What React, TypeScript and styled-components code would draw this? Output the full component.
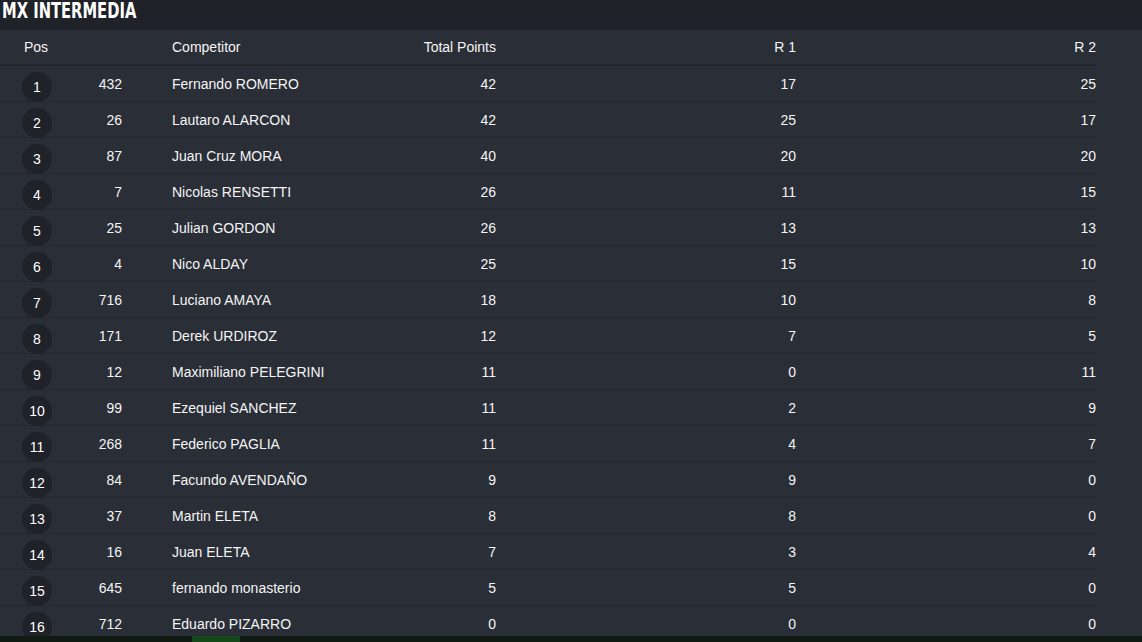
import React from 'react';
import styled, { createGlobalStyle } from 'styled-components';

type Row = {
  pos: number;
  bib: number;
  name: string;
  total: number;
  r1: number;
  r2: number;
};

const rows: Row[] = [
  { pos: 1, bib: 432, name: 'Fernando ROMERO', total: 42, r1: 17, r2: 25 },
  { pos: 2, bib: 26, name: 'Lautaro ALARCON', total: 42, r1: 25, r2: 17 },
  { pos: 3, bib: 87, name: 'Juan Cruz MORA', total: 40, r1: 20, r2: 20 },
  { pos: 4, bib: 7, name: 'Nicolas RENSETTI', total: 26, r1: 11, r2: 15 },
  { pos: 5, bib: 25, name: 'Julian GORDON', total: 26, r1: 13, r2: 13 },
  { pos: 6, bib: 4, name: 'Nico ALDAY', total: 25, r1: 15, r2: 10 },
  { pos: 7, bib: 716, name: 'Luciano AMAYA', total: 18, r1: 10, r2: 8 },
  { pos: 8, bib: 171, name: 'Derek URDIROZ', total: 12, r1: 7, r2: 5 },
  { pos: 9, bib: 12, name: 'Maximiliano PELEGRINI', total: 11, r1: 0, r2: 11 },
  { pos: 10, bib: 99, name: 'Ezequiel SANCHEZ', total: 11, r1: 2, r2: 9 },
  { pos: 11, bib: 268, name: 'Federico PAGLIA', total: 11, r1: 4, r2: 7 },
  { pos: 12, bib: 84, name: 'Facundo AVENDAÑO', total: 9, r1: 9, r2: 0 },
  { pos: 13, bib: 37, name: 'Martin ELETA', total: 8, r1: 8, r2: 0 },
  { pos: 14, bib: 16, name: 'Juan ELETA', total: 7, r1: 3, r2: 4 },
  { pos: 15, bib: 645, name: 'fernando monasterio', total: 5, r1: 5, r2: 0 },
  { pos: 16, bib: 712, name: 'Eduardo PIZARRO', total: 0, r1: 0, r2: 0 },
];

const GlobalStyle = createGlobalStyle`
  *, *::before, *::after {
    box-sizing: border-box;
  }
  html, body {
    margin: 0;
    padding: 0;
    background: #2a2e37;
    overflow: hidden;
  }
  body {
    font-family: "Liberation Sans", Arial, sans-serif;
    color: #f2f2f2;
  }
`;

const Page = styled.div`
  width: 1142px;
  height: 642px;
  display: flex;
  flex-direction: column;
  position: relative;
  overflow: hidden;
`;

const TitleBar = styled.header`
  flex-shrink: 0;
  height: 30px;
  background: #1f2228;
  display: flex;
  align-items: flex-start;
  padding-left: 2px;
`;

const Title = styled.h1`
  margin: 0;
  font-family: "DejaVu Sans Condensed", "DejaVu Sans", sans-serif;
  font-weight: 700;
  font-size: 21px;
  line-height: 23px;
  color: #ffffff;
  transform: scaleX(0.78);
  transform-origin: left center;
  white-space: nowrap;
`;

const Panel = styled.section`
  flex: 1;
  background: #2a2e37;
`;

const Grid = styled.div`
  width: 1096px;
  display: grid;
  grid-template-columns: 72px 100px 200px 124px 300px 300px;
`;

const HeadCell = styled.div<{ $right?: boolean; $pad?: number }>`
  height: 36px;
  display: flex;
  align-items: center;
  justify-content: ${(p) => (p.$right ? 'flex-end' : 'flex-start')};
  padding-left: ${(p) => p.$pad ?? 0}px;
  font-size: 14px;
  color: #f4f4f4;
  border-bottom: 2px solid #22252c;
`;

const Cell = styled.div<{ $right?: boolean; $padRight?: number }>`
  height: 36px;
  display: flex;
  align-items: center;
  justify-content: ${(p) => (p.$right ? 'flex-end' : 'flex-start')};
  padding-right: ${(p) => p.$padRight ?? 0}px;
  font-size: 14px;
  color: #f4f4f4;
  border-bottom: 1px solid #23262d;
`;

const PosCell = styled(Cell)`
  align-items: flex-start;
  padding-left: 22px;
  padding-top: 6px;
`;

const Badge = styled.span`
  flex-shrink: 0;
  width: 30px;
  height: 30px;
  border-radius: 50%;
  background: #1f2228;
  display: flex;
  align-items: center;
  justify-content: center;
  font-size: 14px;
  color: #ffffff;
`;

const ScrollStrip = styled.div`
  position: absolute;
  left: 0;
  right: 0;
  bottom: 0;
  height: 6px;
  background: #0f1a12;
`;

const ScrollThumb = styled.div`
  position: absolute;
  left: 192px;
  top: 0;
  width: 48px;
  height: 6px;
  background: #15491a;
`;

const App: React.FC = () => {
  return (
    <Page>
      <GlobalStyle />
      <TitleBar>
        <Title>MX INTERMEDIA</Title>
      </TitleBar>
      <Panel>
        <Grid>
          <HeadCell $pad={24}>Pos</HeadCell>
          <HeadCell />
          <HeadCell>Competitor</HeadCell>
          <HeadCell $right>Total Points</HeadCell>
          <HeadCell $right>R 1</HeadCell>
          <HeadCell $right>R 2</HeadCell>
          {rows.map((r) => (
            <React.Fragment key={r.pos}>
              <PosCell>
                <Badge>{r.pos}</Badge>
              </PosCell>
              <Cell $right $padRight={50}>{r.bib}</Cell>
              <Cell>{r.name}</Cell>
              <Cell $right>{r.total}</Cell>
              <Cell $right>{r.r1}</Cell>
              <Cell $right>{r.r2}</Cell>
            </React.Fragment>
          ))}
        </Grid>
      </Panel>
      <ScrollStrip>
        <ScrollThumb />
      </ScrollStrip>
    </Page>
  );
};

export default App;
